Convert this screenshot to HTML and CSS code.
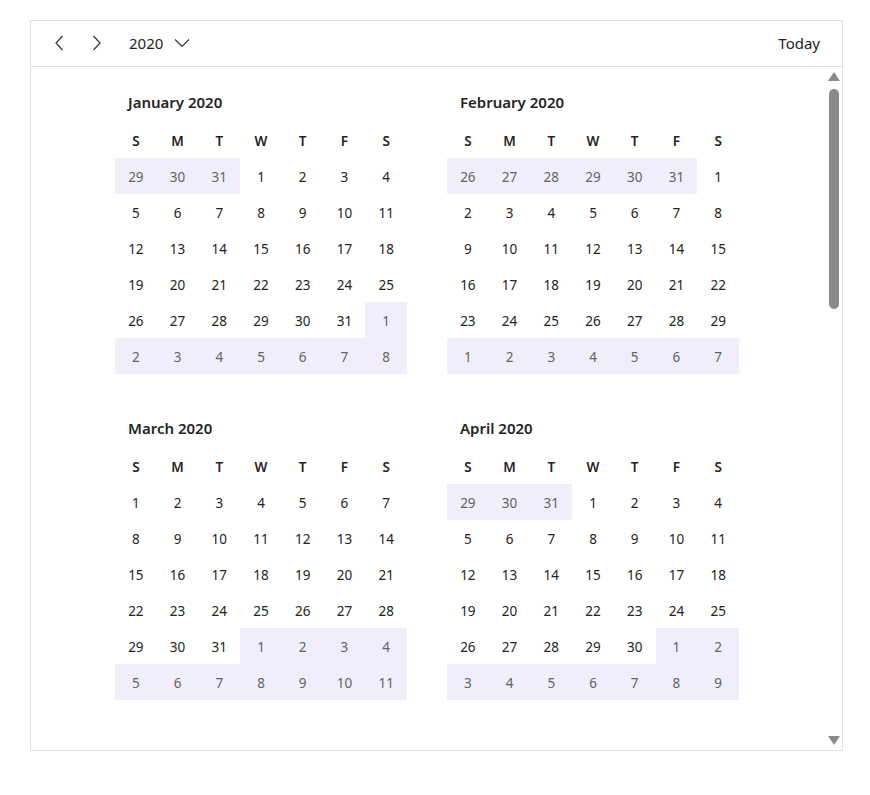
FILE: index.html
```html
<!DOCTYPE html>
<html lang="en">
<head>
    <meta charset="UTF-8">
    <meta name="viewport" content="width=device-width, initial-scale=1.0">
    <title>Year view</title>
    <link rel="stylesheet" href="styles.css">
</head>
<body>
    <div class="calendar">
        <div class="toolbar">
            <button class="icon-btn" title="Previous">
                <svg width="16" height="16" viewBox="0 0 16 16"><path d="M10.5 1 L4 8 L10.5 15" fill="none" stroke="#333" stroke-width="1.2"/></svg>
            </button>
            <button class="icon-btn" title="Next">
                <svg width="16" height="16" viewBox="0 0 16 16"><path d="M5.5 1 L12 8 L5.5 15" fill="none" stroke="#333" stroke-width="1.2"/></svg>
            </button>
            <button class="year-btn">
                2020
                <svg width="16" height="10" viewBox="0 0 16 10"><path d="M1 1.5 L8 8.5 L15 1.5" fill="none" stroke="#333" stroke-width="1.2"/></svg>
            </button>
            <button class="today-btn">Today</button>
        </div>
        <div class="body">
            <div class="scroller">
                <div class="months" id="months"></div>
            </div>
            <div class="scrollbar">
                <span class="arrow up"></span>
                <div class="track"><div class="thumb"></div></div>
                <span class="arrow down"></span>
            </div>
        </div>
    </div>

    <script>
        const monthNames = ["January", "February", "March", "April", "May", "June",
            "July", "August", "September", "October", "November", "December"];
        const dayLetters = ["S", "M", "T", "W", "T", "F", "S"];
        const year = 2020;
        const visibleMonths = 4;

        function renderMonth(month) {
            const box = document.createElement("div");
            box.className = "month";

            const title = document.createElement("div");
            title.className = "month-title";
            title.textContent = monthNames[month] + " " + year;
            box.appendChild(title);

            const grid = document.createElement("div");
            grid.className = "grid";

            dayLetters.forEach(letter => {
                const head = document.createElement("div");
                head.className = "weekday";
                head.textContent = letter;
                grid.appendChild(head);
            });

            // 6 rows, starting on the Sunday before the 1st
            const first = new Date(year, month, 1);
            const start = new Date(year, month, 1 - first.getDay());
            for (let i = 0; i < 42; i++) {
                const d = new Date(start.getFullYear(), start.getMonth(), start.getDate() + i);
                const cell = document.createElement("div");
                cell.className = "day";
                if (d.getMonth() !== month) cell.classList.add("other");
                cell.textContent = d.getDate();
                grid.appendChild(cell);
            }

            box.appendChild(grid);
            return box;
        }

        const holder = document.getElementById("months");
        for (let m = 0; m < visibleMonths; m++) {
            holder.appendChild(renderMonth(m));
        }
    </script>
</body>
</html>
```

FILE: styles.css
```css
body {
    margin: 0;
    padding: 20px 27px 0 30px;
    font-family: "Noto Sans", "Open Sans", sans-serif;
    color: #242424;
    background: #fff;
}
.calendar {
    width: 811px;
    height: 729px;
    border: 1px solid #e0e0e0;
    display: flex;
    flex-direction: column;
}
.toolbar {
    height: 43px;
    padding: 0 14px 2px 15px;
    border-bottom: 1px solid #e0e0e0;
    display: flex;
    align-items: center;
}
button {
    background: none;
    border: none;
    font-family: inherit;
    color: #242424;
    cursor: pointer;
    padding: 0;
}
.icon-btn {
    width: 28px;
    height: 28px;
    margin-right: 8px;
    display: flex;
    align-items: center;
    justify-content: center;
}
.year-btn {
    display: flex;
    align-items: center;
    gap: 11px;
    font-size: 15px;
    margin-left: 11px;
}
.year-btn svg {
    margin-top: 1px;
}
.today-btn {
    margin-left: auto;
    font-size: 15px;
    padding: 4px 8px;
}
.body {
    flex: 1;
    display: flex;
    min-height: 0;
}
.scroller {
    flex: 1;
    overflow: hidden;
    padding: 17px 0 0 84px;
}
.months {
    width: 624px;
    display: grid;
    grid-template-columns: 292px 292px;
    column-gap: 40px;
    row-gap: 36px;
}
.month-title {
    height: 38px;
    line-height: 36px;
    padding-left: 13px;
    font-size: 15px;
    font-weight: 600;
}
.grid {
    display: grid;
    grid-template-columns: repeat(7, 1fr);
    grid-auto-rows: 36px;
}
.weekday,
.day {
    display: flex;
    align-items: center;
    justify-content: center;
    padding-top: 2px;
    font-size: 13.5px;
}
.weekday {
    font-weight: 600;
}
.day.other {
    background: #efeefa;
    color: #646464;
}
.scrollbar {
    width: 16px;
    display: flex;
    flex-direction: column;
    align-items: center;
    padding: 5px 0 5px;
}
.arrow {
    width: 0;
    height: 0;
    border-left: 6px solid transparent;
    border-right: 6px solid transparent;
}
.arrow.up {
    border-bottom: 9px solid #8a8a8a;
}
.arrow.down {
    border-top: 9px solid #8a8a8a;
}
.track {
    flex: 1;
    width: 100%;
    padding-top: 8px;
    display: flex;
    justify-content: center;
}
.thumb {
    width: 10px;
    height: 220px;
    border-radius: 5px;
    background: #8a8a8a;
}
```
